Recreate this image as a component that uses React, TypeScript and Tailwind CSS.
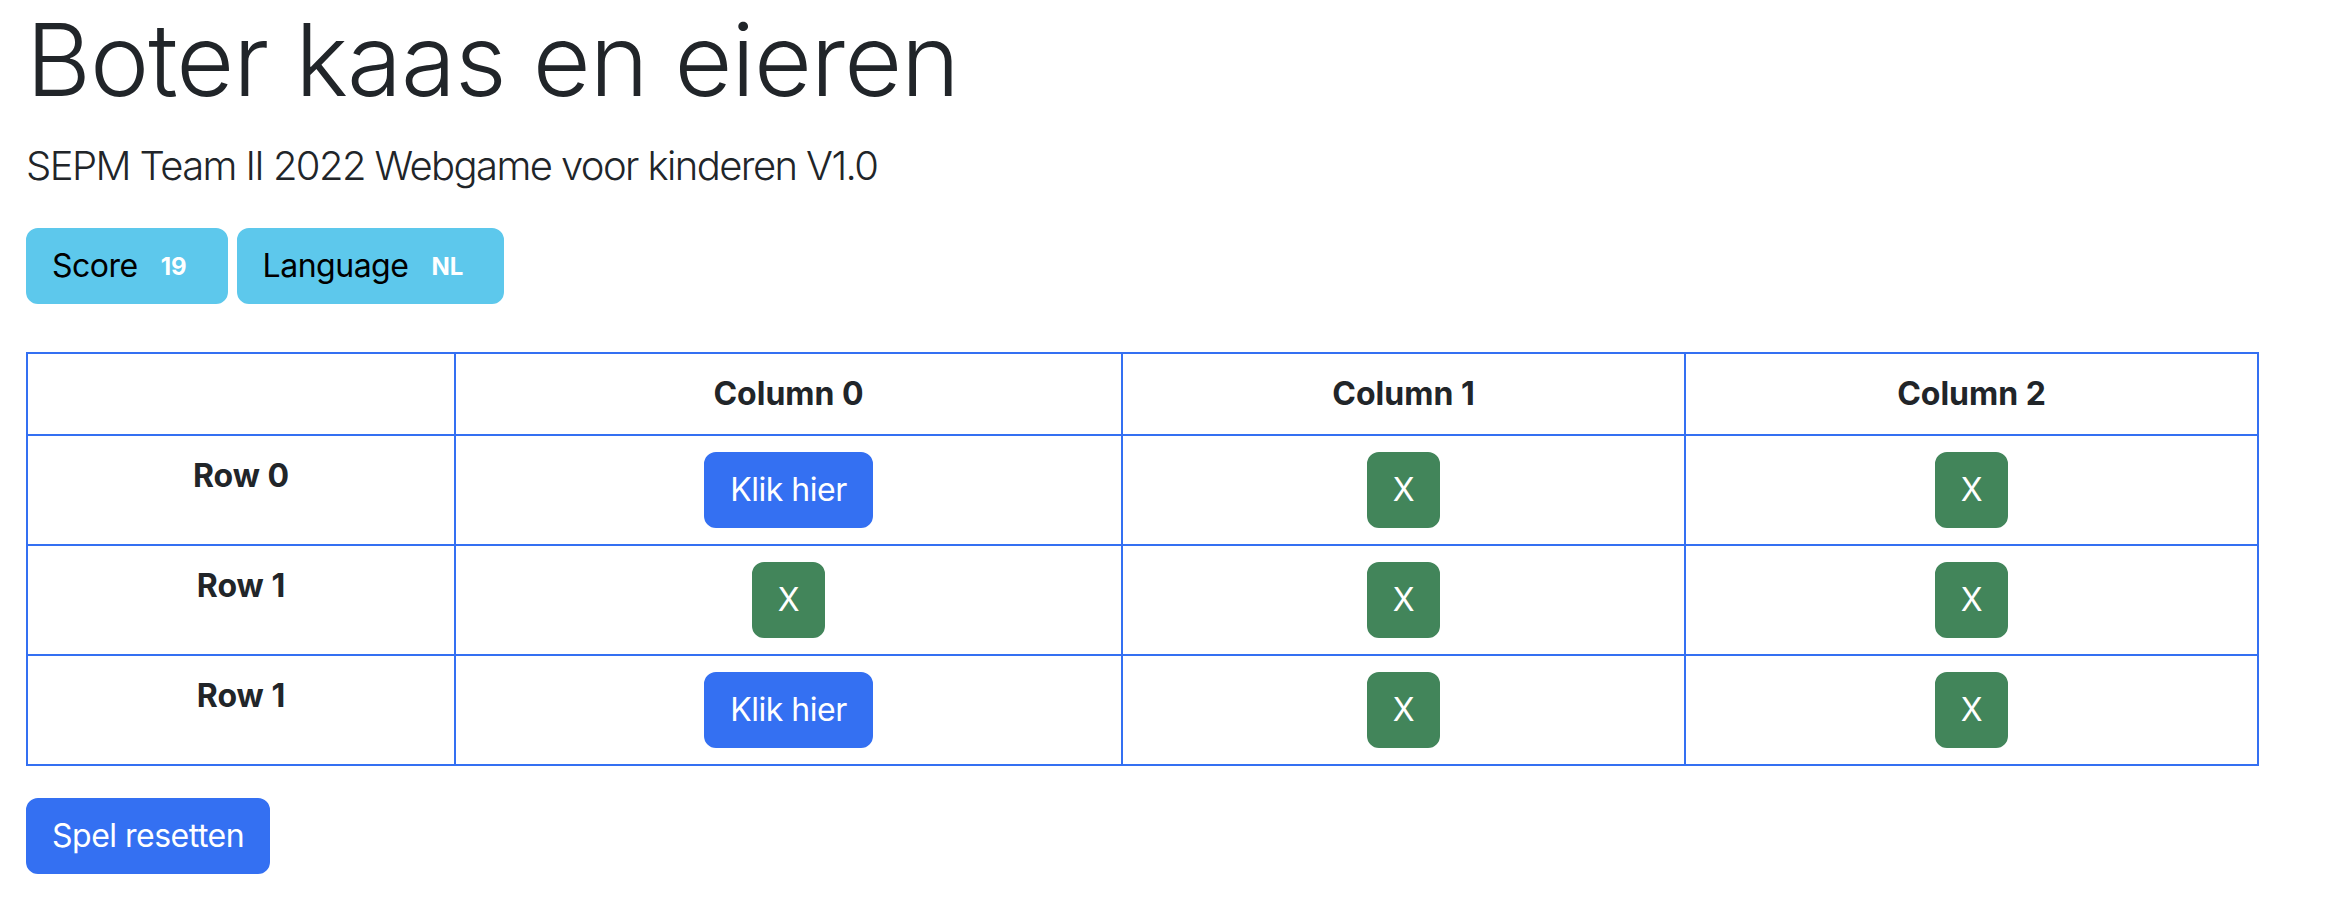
import React from 'react';

type Cell = 'empty' | 'X';

const board: { label: string; cells: Cell[] }[] = [
  { label: 'Row 0', cells: ['empty', 'X', 'X'] },
  { label: 'Row 1', cells: ['X', 'X', 'X'] },
  { label: 'Row 1', cells: ['empty', 'X', 'X'] },
];

const btn =
  'inline-block rounded-[12px] border-2 px-[24px] py-[12px] text-[32px] leading-[48px] font-normal tracking-[-0.5px]';

const App: React.FC = () => {
  return (
    <div className="min-h-screen bg-white px-[26px] font-['Inter',sans-serif] text-[#212529]">
      {/* Header */}
      <h1 className="text-[100px] font-light leading-[1.2] tracking-[-1px] mb-[16px]">
        Boter kaas en eieren
      </h1>
      <p className="text-[40px] font-light leading-[1.5] tracking-[-1.6px] mb-[32px]">
        SEPM Team II 2022 Webgame voor kinderen V1.0
      </p>

      {/* Status buttons */}
      <div className="flex gap-[9px]">
        <button className={`${btn} bg-[#5dc8ec] border-[#5dc8ec] text-black`}>
          Score
          <span className="ml-[8px] inline-block px-[15px] py-[8px] text-[24px] leading-none font-bold text-white tracking-normal align-[2px]">
            19
          </span>
        </button>
        <button className={`${btn} bg-[#5dc8ec] border-[#5dc8ec] text-black`}>
          Language
          <span className="ml-[8px] inline-block px-[15px] py-[8px] text-[24px] leading-none font-bold text-white tracking-normal align-[2px]">
            NL
          </span>
        </button>
      </div>

      {/* Game board */}
      <table className="mt-[48px] mb-[32px] w-[2231px] table-fixed border-collapse border-2 border-[#3470f2] text-[32px] leading-[48px]">
        <colgroup>
          <col className="w-[428px]" />
          <col className="w-[667px]" />
          <col className="w-[563px]" />
          <col className="w-[573px]" />
        </colgroup>
        <thead>
          <tr>
            <th className="border-2 border-[#3470f2] p-[16px]" />
            {['Column 0', 'Column 1', 'Column 2'].map(c => (
              <th key={c} className="border-2 border-[#3470f2] p-[16px] font-bold text-center">
                {c}
              </th>
            ))}
          </tr>
        </thead>
        <tbody>
          {board.map((row, i) => (
            <tr key={i}>
              <th className="border-2 border-[#3470f2] p-[16px] font-bold text-center align-top">
                {row.label}
              </th>
              {row.cells.map((cell, j) => (
                <td key={j} className="border-2 border-[#3470f2] p-[16px] text-center align-middle">
                  {cell === 'X' ? (
                    <button className={`${btn} bg-[#42855a] border-[#42855a] text-white`}>X</button>
                  ) : (
                    <button className={`${btn} bg-[#3470f2] border-[#3470f2] text-white`}>
                      Klik hier
                    </button>
                  )}
                </td>
              ))}
            </tr>
          ))}
        </tbody>
      </table>

      <button className={`${btn} bg-[#3470f2] border-[#3470f2] text-white`}>Spel resetten</button>
    </div>
  );
};

export default App;
